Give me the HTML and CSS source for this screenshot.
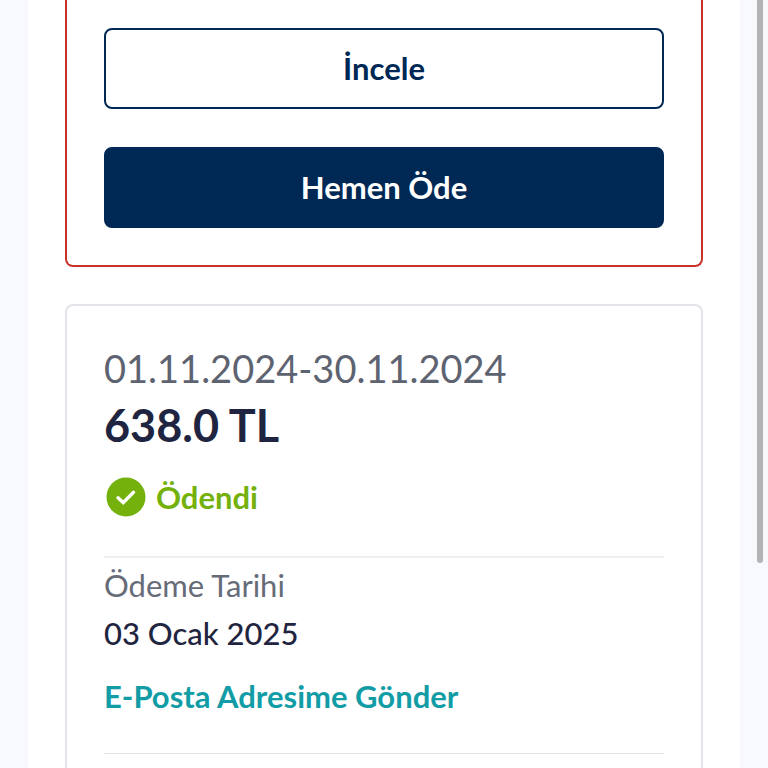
FILE: index.html
```html
<!DOCTYPE html>
<html lang="tr">
<head>
    <meta charset="UTF-8">
    <meta name="viewport" content="width=device-width, initial-scale=1.0">
    <title>Faturalarım</title>
    <link rel="stylesheet" href="styles.css">
</head>
<body>

    <main class="panel">
        <section class="card card-unpaid">
            <button type="button" class="btn btn-outline">İncele</button>
            <button type="button" class="btn btn-primary">Hemen Öde</button>
        </section>

        <section class="card card-paid">
            <div class="period">01.11.2024-30.11.2024</div>
            <div class="amount">638.0 TL</div>
            <div class="status">
                <svg class="status-icon" viewBox="0 0 40 40" aria-hidden="true">
                    <circle cx="20" cy="20" r="19.5" fill="#74b10c"/>
                    <path d="M12 20.8l5.2 4.8 10.3-10.4" fill="none" stroke="#ffffff" stroke-width="3.4" stroke-linecap="round" stroke-linejoin="miter"/>
                </svg>
                <span>Ödendi</span>
            </div>

            <div class="payment">
                <div class="label">Ödeme Tarihi</div>
                <div class="date">03 Ocak 2025</div>
                <a class="send-link" href="#">E-Posta Adresime Gönder</a>
            </div>
        </section>
    </main>

    <div class="scroll-thumb"></div>

</body>
</html>
```

FILE: styles.css
```css
* {
    box-sizing: border-box;
}

body {
    display: flex;
    min-height: 100vh;
    margin: 0;
    padding: 0 28px;
    background-color: #f7f9fc;
    font-family: Lato, 'Liberation Sans', sans-serif;
    color: #1f2540;
}

.panel {
    display: flex;
    flex-direction: column;
    flex: 1;
    gap: 37px;
    padding: 0 37px;
    background-color: #ffffff;
}

.card {
    border: 2px solid #e3e4e9;
    border-radius: 8px;
}

.card-unpaid {
    display: flex;
    flex-direction: column;
    gap: 38px;
    padding: 28px 37px 37px;
    border-color: #c8322b;
    border-top: none;
    border-top-left-radius: 0;
    border-top-right-radius: 0;
}

.card-paid {
    flex: 1;
    padding: 37px 37px 12px;
    border-bottom: none;
    border-bottom-left-radius: 0;
    border-bottom-right-radius: 0;
}

.btn {
    height: 81px;
    padding: 0 12px 2px;
    border: 2px solid #002855;
    border-radius: 8px;
    font-family: inherit;
    font-size: 31px;
    font-weight: bold;
    cursor: pointer;
}

.btn-outline {
    background-color: #ffffff;
    color: #002855;
}

.btn-primary {
    background-color: #002855;
    color: #ffffff;
}

.period {
    color: #5d6370;
    font-size: 38px;
    line-height: 50px;
}

.amount {
    font-size: 45px;
    font-weight: bold;
    line-height: 64px;
}

.status {
    display: flex;
    align-items: center;
    gap: 10px;
    margin: 19px 0 38px;
    padding-left: 2px;
    color: #74b10c;
    font-size: 31px;
    font-weight: bold;
    line-height: 42px;
}

.status-icon {
    width: 40px;
    height: 40px;
}

.payment {
    padding: 6px 0 36px;
    border-top: 2px solid #eeeff1;
    border-bottom: 1px solid #e3e4e6;
    font-size: 31px;
    line-height: 42px;
}

.label {
    color: #666b78;
}

.date {
    margin: 6px 0 21px;
    font-weight: 500;
}

.send-link {
    display: block;
    color: #129da6;
    font-weight: bold;
    text-decoration: none;
}

.scroll-thumb {
    position: absolute;
    top: 0;
    right: 5px;
    width: 6px;
    height: 563px;
    border-radius: 0 0 3px 3px;
    background-color: #b1b3b5;
}
```
